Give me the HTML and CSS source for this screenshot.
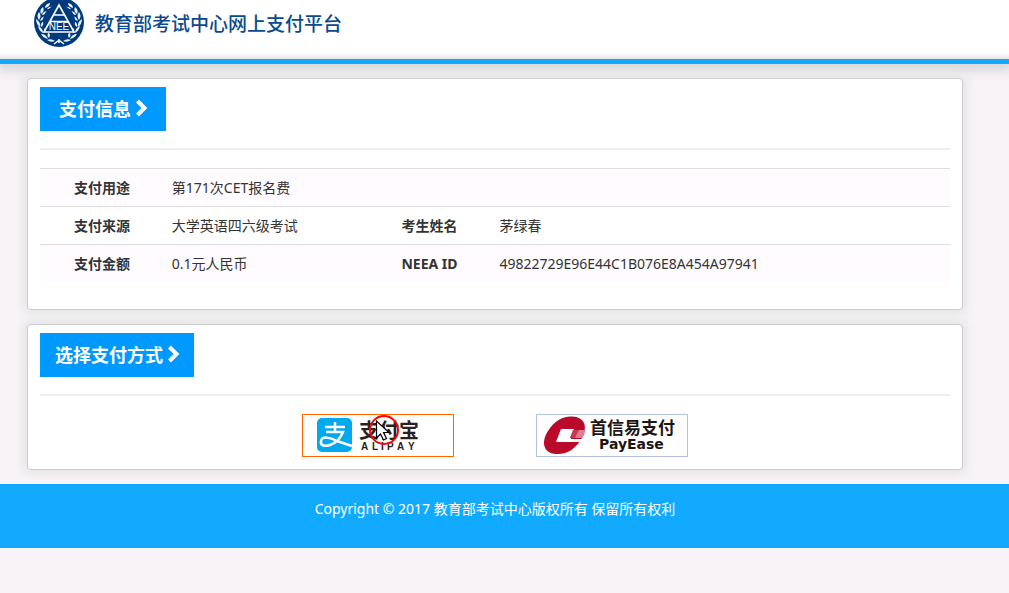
FILE: index.html
```html
<!DOCTYPE html>
<html lang="zh-CN">
<head>
<meta charset="utf-8">
<title>教育部考试中心网上支付平台</title>
<link rel="stylesheet" href="styles.css">
</head>
<body>
<header class="site-header">
  <svg class="emblem" viewBox="0 3 50 47" aria-hidden="true">
    <circle cx="25" cy="25" r="25" fill="#003a7d"/>
    <g fill="#e8f0f8">
      <g id="branch">
        <path d="M21 44q-4-3-8-1q4 3 8 1z"/>
        <path d="M14 42q-2-5-7-5q2 4 7 5zM15 41q2-3 0-6q-3 3 0 6z"/>
        <path d="M9 36q0-5-5-7q1 5 5 7zM10 36q3-2 2-6q-3 2-2 6z"/>
        <path d="M6 30q1-5-4-8q0 5 4 8zM7 30q3-2 3-6q-4 2-3 6z"/>
        <path d="M5 23q3-4 0-8q-3 4 0 8zM6 24q4-1 5-5q-4 1-5 5z"/>
        <path d="M7 17q4-3 2-7q-4 3-2 7zM8 18q4 0 6-4q-5 0-6 4z"/>
        <path d="M11 11q5-1 5-5q-5 1-5 5zM13 12q4 1 6-2q-4-1-6 2z"/>
      </g>
      <use href="#branch" transform="matrix(-1 0 0 1 50 0)"/>
    </g>
    <path d="M20 47l4-3h2l4 3M25 42v4" fill="none" stroke="#fff" stroke-width="1.4"/>
    <circle cx="25" cy="24" r="16" fill="#003a7d"/>
    <path d="M25 8L10 35h30z" fill="#003a7d" stroke="#fff" stroke-width="1.600"/>
    <path d="M20 18h10M16 24.500h18" fill="none" stroke="#fff" stroke-width="1.400"/>
    <text class="emblem-text" x="25" y="33" text-anchor="middle">NEE</text>
  </svg>
  <h1 class="site-title">教育部考试中心网上支付平台</h1>
</header>

<main class="content">
  <section class="panel panel-info">
    <h2 class="panel-title">支付信息
      <svg class="chevron" viewBox="0 0 13 18" aria-hidden="true"><path d="M2.500 2L9.500 9l-7 7"/></svg>
    </h2>
    <hr class="rule">
    <table class="info">
      <colgroup><col class="col-label"><col class="col-value"><col class="col-label"><col></colgroup>
      <tbody>
        <tr><th scope="row">支付用途</th><td colspan="3">第171次CET报名费</td></tr>
        <tr><th scope="row">支付来源</th><td>大学英语四六级考试</td><th scope="row">考生姓名</th><td>茅绿春</td></tr>
        <tr><th scope="row">支付金额</th><td>0.1元人民币</td><th scope="row">NEEA ID</th><td>49822729E96E44C1B076E8A454A97941</td></tr>
      </tbody>
    </table>
  </section>

  <section class="panel">
    <h2 class="panel-title">选择支付方式
      <svg class="chevron" viewBox="0 0 13 18" aria-hidden="true"><path d="M2.500 2L9.500 9l-7 7"/></svg>
    </h2>
    <hr class="rule">
    <div class="methods">
      <button class="method method-active" type="button">
        <svg class="method-art" viewBox="0 0 150 41">
          <rect x="14" y="3" width="35" height="34" rx="5" fill="#00a8ee"/>
          <path d="M22 12h20M32 7v10M23 17h17Q36 27 27 30C21 32 17 30 18 26C19 21 27 22 34 26L49 31" fill="none" stroke="#fff" stroke-width="2.500"/>
          <text class="alipay-name" x="56" y="23">支付宝</text>
          <text class="alipay-latin"><tspan x="58">A</tspan><tspan x="69">L</tspan><tspan x="78">I</tspan><tspan x="84">P</tspan><tspan x="94">A</tspan><tspan x="105">Y</tspan></text>
        </svg>
        <svg class="pointer" viewBox="0 0 32 32" aria-hidden="true">
          <circle cx="16" cy="16" r="14" fill="none" stroke="#f00" stroke-width="2"/>
          <path d="M8.500 7v17l4-4 3 6 3-1.500-3-6h5.500z" fill="#fff" stroke="#000" stroke-width="1.200"/>
        </svg>
      </button>
      <button class="method" type="button">
        <svg class="method-art" viewBox="0 0 150 41">
          <path d="M35 1.500C48 2 51 12 45 23C39 34 29 40 19 39C6 38 4 27 11 16C17 6 26 1 35 1.500z" fill="#b90a2b"/>
          <path d="M24 14h13l-3 10h12l-1 3H19z" fill="#fff"/>
          <path d="M36 15h12q0 5-3 8H33z" fill="#df7e90"/>
          <path d="M36 15l-3 8h5l4-8z" fill="#c83a54"/>
          <text class="payease-name" x="53" y="19">首信易支付</text>
          <text class="payease-latin" x="62" y="34">PayEase</text>
        </svg>
      </button>
    </div>
  </section>
</main>

<footer class="site-footer">Copyright © 2017 教育部考试中心版权所有 保留所有权利</footer>
</body>
</html>
```
FILE: styles.css
```css
* { box-sizing: border-box; }

body {
  margin: 0;
  background: #f7f3f7;
  color: #333;
  font: 14px/21px "Noto Sans", "Noto Sans CJK SC", sans-serif;
}

.site-header {
  display: flex;
  align-items: flex-start;
  gap: 11px;
  height: 64px;
  padding-left: 34px;
  background: linear-gradient(#fff 53px, #e8e4e8 59px);
  border-bottom: 5px solid #1af;
  box-shadow: 0 4px 10px 3px #d8d8d8;
}

.emblem { flex: none; width: 50px; height: 47px; }

.emblem-text { font: 10px "Liberation Sans", sans-serif; fill: #fff; }

.site-title {
  margin: 0;
  padding-top: 9px;
  color: #0b4a8c;
  font-family: "Noto Sans CJK SC", sans-serif;
  font-size: 19px;
  font-weight: 500;
  line-height: 27px;
}

.content {
  display: flex;
  flex-direction: column;
  gap: 14px;
  padding: 14px 46px 14px 27px;
}

.panel {
  padding: 8px 12px 12px;
  background: #fff;
  border: 1px solid #ccc;
  border-radius: 4px;
  box-shadow: 0 0 8px 4px #e6e6e6;
}

.panel-info { padding-bottom: 27px; }

.panel-title {
  display: inline-flex;
  align-items: center;
  justify-content: center;
  gap: 4px;
  min-width: 126px;
  height: 44px;
  margin: 0;
  padding: 0 14px 2px 15px;
  background: #09f;
  color: #fff;
  font-family: "Noto Sans CJK SC", sans-serif;
  font-size: 18px;
  font-weight: 700;
  vertical-align: top;
}

.chevron { width: 13px; height: 18px; }

.chevron path { fill: none; stroke: #fff; stroke-width: 4; }

.rule {
  height: 2px;
  margin: 17px 0 18px;
  border: 0;
  background: #eee;
}

.info {
  width: 100%;
  table-layout: fixed;
  border-collapse: collapse;
}

.col-label { width: 13.5%; }
.col-value { width: 22.5%; }

.info th,
.info td {
  padding: 8px 8px 8px 9px;
  border-top: 1px solid #ddd;
  text-align: left;
}

.info th { text-align: center; font-weight: 700; }

.info tr:nth-child(odd) { background: #fffbff; }

.methods {
  display: flex;
  flex-wrap: wrap;
  justify-content: center;
  gap: 82px;
}

.method {
  position: relative;
  width: 152px;
  height: 43px;
  padding: 0;
  background: #fff;
  border: 1px solid #b2c2e5;
}

.method-active { border-color: #f60; }

.method-art { display: block; width: 150px; height: 41px; }

.pointer {
  position: absolute;
  left: 65px;
  top: -1px;
  width: 32px;
  height: 32px;
}

.alipay-name { font: 700 20px "Liberation Sans", "Noto Sans CJK SC", sans-serif; fill: #2b2220; }

.alipay-latin { font: 700 10px "Liberation Sans", sans-serif; fill: #2b2220; transform: translateY(35px); }

.payease-name { font: 700 17px "Liberation Sans", "Noto Sans CJK SC", sans-serif; fill: #1d1512; }

.payease-latin { font: 700 14px "DejaVu Sans", sans-serif; fill: #1d1512; }

.site-footer {
  min-height: 64px;
  padding: 14px 46px 29px 27px;
  background: #1af;
  color: #fff;
  text-align: center;
}
```
